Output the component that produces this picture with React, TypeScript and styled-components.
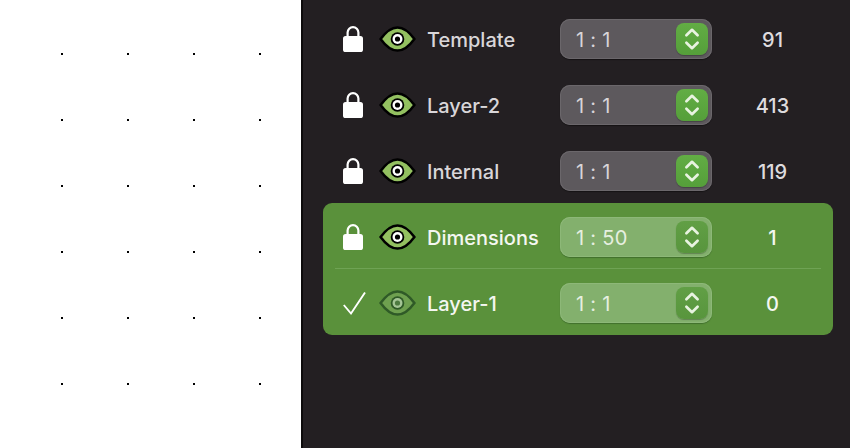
import styled, { createGlobalStyle } from 'styled-components';

const layers = [
  { name: 'Template', scale: '1 : 1', count: 91 },
  { name: 'Layer-2', scale: '1 : 1', count: 413 },
  { name: 'Internal', scale: '1 : 1', count: 119 },
];

const activeLayers = [
  { name: 'Dimensions', scale: '1 : 50', count: 1, current: false },
  { name: 'Layer-1', scale: '1 : 1', count: 0, current: true },
];

const LockIcon = () => (
  <svg width="20" height="26" viewBox="0 0 20 26">
    <path d="M4.6 12V6.6a5.4 5.4 0 0 1 10.8 0V12" fill="none" stroke="#fff" strokeWidth="2.2" />
    <rect x="0" y="10" width="20" height="16" rx="2.6" fill="#fff" />
  </svg>
);

const CheckIcon = () => (
  <svg width="24" height="26" viewBox="0 0 24 26">
    <path d="M0.8 15 L8 23.5 L22 2.5" fill="none" stroke="#fff" strokeWidth="1.9" />
  </svg>
);

const EyeIcon = ({ dim }: { dim?: boolean }) => (
  <svg width="37" height="26" viewBox="0 0 37 26">
    <path
      d="M1.6 13 C7 5.5 12.5 1.4 18.5 1.4 C24.5 1.4 30 5.5 35.4 13 C30 20.5 24.5 24.6 18.5 24.6 C12.5 24.6 7 20.5 1.6 13 Z"
      fill={dim ? '#6ea04f' : '#93c060'}
      stroke={dim ? '#2f5a27' : '#000'}
      strokeWidth="2.5"
    />
    <circle cx="18.5" cy="13" r="6.8" fill={dim ? '#2f5a27' : '#000'} />
    <circle cx="18.5" cy="13" r="5" fill={dim ? '#a5c596' : '#fff'} />
    <circle cx="18.5" cy="13" r="2.6" fill={dim ? '#4d7a40' : '#000'} />
  </svg>
);

const Chevrons = () => (
  <svg width="18" height="24" viewBox="0 0 18 24">
    <path
      d="M3.4 8.2 L9 2.8 L14.6 8.2 M3.4 15.8 L9 21.2 L14.6 15.8"
      fill="none"
      stroke="#e8f3e0"
      strokeWidth="2.7"
      strokeLinecap="round"
      strokeLinejoin="round"
    />
  </svg>
);

const LayerRow = ({
  name,
  scale,
  count,
  active,
  current,
}: {
  name: string;
  scale: string;
  count: number;
  active?: boolean;
  current?: boolean;
}) => (
  <Row>
    <LockCell>{current ? <CheckIcon /> : <LockIcon />}</LockCell>
    <EyeCell>
      <EyeIcon dim={current} />
    </EyeCell>
    <Name $active={active}>{name}</Name>
    <Stepper $active={active}>
      <ScaleText $active={active}>{scale}</ScaleText>
      <StepButton $active={active}>
        <Chevrons />
      </StepButton>
    </Stepper>
    <Count $active={active}>{count}</Count>
  </Row>
);

const App = () => (
  <>
    <GlobalStyle />
    <Page>
      <Canvas>
        {Array.from({ length: 24 }, (_, i) => (
          <Dot key={i} />
        ))}
      </Canvas>
      <Panel>
        {layers.map((layer) => (
          <LayerRow key={layer.name} {...layer} />
        ))}
        <ActiveGroup>
          {activeLayers.map((layer) => (
            <LayerRow key={layer.name} {...layer} active />
          ))}
        </ActiveGroup>
      </Panel>
    </Page>
  </>
);

export default App;

const GlobalStyle = createGlobalStyle`
  html, body {
    margin: 0;
    padding: 0;
    overflow: hidden;
    background: #231f22;
  }
`;

const Page = styled.div`
  display: flex;
  width: 850px;
  height: 448px;
  font-family: Inter, "Liberation Sans", sans-serif;
`;

const Canvas = styled.div`
  box-sizing: border-box;
  width: 301px;
  height: 100%;
  padding: 53px 0 0 61px;
  background: #fff;
  display: grid;
  grid-template-columns: repeat(4, 66px);
  grid-auto-rows: 66px;
`;

const Dot = styled.span`
  width: 2px;
  height: 2px;
  background: #000;
`;

const Panel = styled.div`
  box-sizing: border-box;
  flex: 1;
  padding: 5px 17px 0 20px;
  background: #231f22;
  border-left: 2px solid #0d0b0c;
`;

const ActiveGroup = styled.div`
  background: #5a913b;
  border-radius: 9px;
  & > div:first-child::after {
    content: '';
    position: absolute;
    left: 12px;
    right: 12px;
    bottom: 0;
    height: 1px;
    background: #6fa354;
  }
`;

const Row = styled.div`
  position: relative;
  box-sizing: border-box;
  height: 66px;
  padding: 2px 0 0 20px;
  display: flex;
  align-items: center;
`;

const LockCell = styled.div`
  width: 37px;
  display: flex;
  flex-shrink: 0;
`;

const EyeCell = styled.div`
  width: 47px;
  display: flex;
  flex-shrink: 0;
  margin-left: -1px;
  padding-right: 1px;
`;

const Name = styled.div<{ $active?: boolean }>`
  width: 133px;
  flex-shrink: 0;
  padding-top: 2px;
  font-size: 20px;
  font-weight: 500;
  color: ${(p) => (p.$active ? '#f4f7f1' : '#d9d6d9')};
`;

const Stepper = styled.div<{ $active?: boolean }>`
  box-sizing: border-box;
  width: 152px;
  height: 40px;
  flex-shrink: 0;
  padding: 0 4px 0 16px;
  border-radius: 10px;
  display: flex;
  align-items: center;
  justify-content: space-between;
  background: ${(p) => (p.$active ? '#83b06d' : '#5d595d')};
  box-shadow: ${(p) =>
    p.$active
      ? 'inset 0 0 0 1px #8db878, 0 1px 1px rgba(40, 80, 30, 0.5)'
      : 'inset 0 0 0 1px #6b676b, 0 1px 1px rgba(0, 0, 0, 0.4)'};
`;

const ScaleText = styled.span<{ $active?: boolean }>`
  padding-top: 2px;
  font-size: 20px;
  letter-spacing: 0.3px;
  color: ${(p) => (p.$active ? '#e6efe0' : '#d8d5d8')};
`;

const StepButton = styled.div<{ $active?: boolean }>`
  width: 32px;
  height: 32px;
  border-radius: 8px;
  display: flex;
  align-items: center;
  justify-content: center;
  background: ${(p) =>
    p.$active
      ? 'linear-gradient(#619f45, #58953d)'
      : 'linear-gradient(#62ad44, #559f3a)'};
  box-shadow: 0 1px 1px rgba(0, 0, 0, 0.25);
`;

const Count = styled.div<{ $active?: boolean }>`
  width: 121px;
  flex-shrink: 0;
  padding-top: 2px;
  text-align: center;
  font-size: 20px;
  font-weight: 500;
  color: ${(p) => (p.$active ? '#f4f7f1' : '#dedbde')};
`;
